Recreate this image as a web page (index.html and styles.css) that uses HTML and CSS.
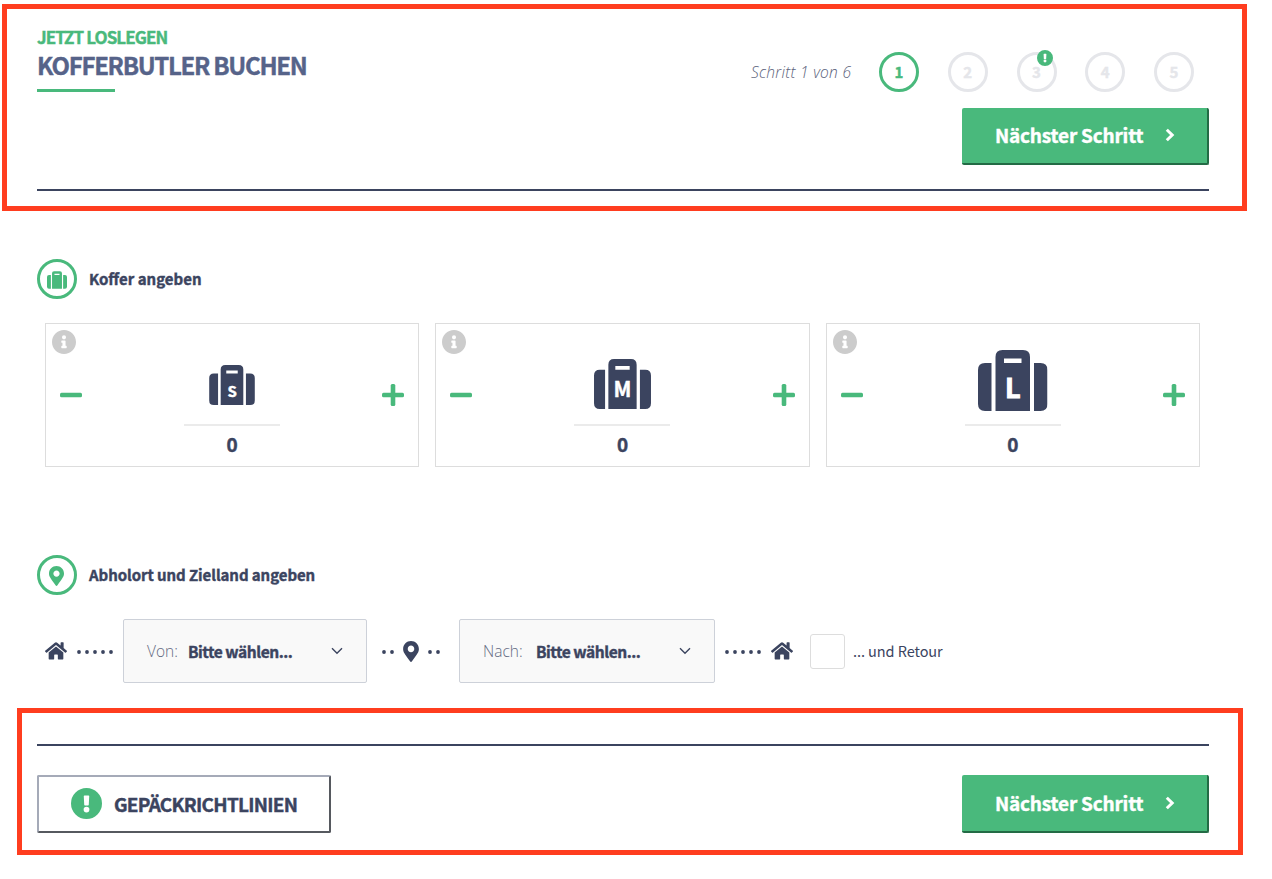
FILE: index.html
```html
<!DOCTYPE html>
<html lang="de">
<head>
<meta charset="utf-8">
<title>Kofferbutler buchen</title>
<link rel="stylesheet" href="styles.css">
</head>
<body>
<svg class="defs" width="0" height="0">
  <symbol id="suitcase" viewBox="0 0 69.5 61">
    <path d="M13.5 13H7Q0 13 0 20v34q0 7 7 7h6.5zM56 13h6.5q7 0 7 7v34q0 7-7 7H56z"/>
    <path fill-rule="evenodd" d="M17.5 61V7q0-7 7-7H45q7 0 7 7v54zM26 8.5V13h17.500V8.500z"/>
  </symbol>
  <symbol id="pin" viewBox="0 0 384 512"><path d="M172.300 501.700C27 291 0 269.400 0 192 0 86 86 0 192 0s192 86 192 192c0 77.400-27 99-172.300 309.700-9.500 13.800-29.900 13.800-39.400 0zM192 272c44.200 0 80-35.800 80-80s-35.800-80-80-80-80 35.800-80 80 35.800 80 80 80z"/></symbol>
  <symbol id="home" viewBox="0 0 576 450"><path d="M280.400 115.300 96 267.100V431a16 16 0 0 0 16 16l112-.3a16 16 0 0 0 16-16V335a16 16 0 0 1 16-16h64a16 16 0 0 1 16 16v95.600a16 16 0 0 0 16 16l112 .4a16 16 0 0 0 16-16V267L295.700 115.300a12 12 0 0 0-15.300 0zM571.600 218.500 488 149.600V11.100a12 12 0 0 0-12-12h-56a12 12 0 0 0-12 12v72.600L318.500 10a48 48 0 0 0-61 0L4.300 218.500a12 12 0 0 0-1.600 16.900l25.500 31a12 12 0 0 0 16.900 1.600L280.400 74.100a12 12 0 0 1 15.300 0L531 267.900a12 12 0 0 0 16.900-1.600l25.500-31a12 12 0 0 0-1.800-16.800z"/></symbol>
  <symbol id="info" viewBox="8 8 496 496"><path d="M256 8C119 8 8 119 8 256s111 248 248 248 248-111 248-248S393 8 256 8zm0 110a42 42 0 1 1 0 84 42 42 0 0 1 0-84zm56 254a12 12 0 0 1-12 12h-88a12 12 0 0 1-12-12v-24a12 12 0 0 1 12-12h12v-64h-12a12 12 0 0 1-12-12v-24a12 12 0 0 1 12-12h64a12 12 0 0 1 12 12v100h12a12 12 0 0 1 12 12z"/></symbol>
  <symbol id="alert" viewBox="8 8 496 496"><path d="M504 256a248 248 0 1 1-496 0 248 248 0 0 1 496 0zM256 306a46 46 0 1 0 0 92 46 46 0 0 0 0-92zm-43.700-165.300 7.400 136a12 12 0 0 0 12 11.300h48.600a12 12 0 0 0 12-11.300l7.400-136a12 12 0 0 0-12-12.700h-63.400a12 12 0 0 0-12 12.700z"/></symbol>
  <symbol id="dots5" viewBox="0 0 36 4"><circle cx="2" cy="2" r="1.900"/><circle cx="10" cy="2" r="1.900"/><circle cx="18" cy="2" r="1.900"/><circle cx="26" cy="2" r="1.900"/><circle cx="34" cy="2" r="1.900"/></symbol>
  <symbol id="dots2" viewBox="0 0 12 4"><circle cx="2" cy="2" r="1.900"/><circle cx="10" cy="2" r="1.900"/></symbol>
  <symbol id="minus" viewBox="0 0 22 22"><rect y="8.700" width="22" height="4.600" rx="1.500"/></symbol>
  <symbol id="plus" viewBox="0 0 22 22"><rect y="8.700" width="22" height="4.600" rx="1.500"/><rect x="8.700" width="4.600" height="22" rx="1.500"/></symbol>
  <symbol id="next" viewBox="0 0 10 14"><path d="M1.800 1.700L7.200 7l-5.400 5.300" fill="none" stroke="currentColor" stroke-width="3"/></symbol>
  <symbol id="down" viewBox="0 0 12 8"><path d="M1 1.200l5 5 5-5" fill="none" stroke="currentColor" stroke-width="1.400"/></symbol>
</svg>

<main class="page">
  <header class="header">
    <div class="heading">
      <p class="kicker"><span>JETZT LOSLEGEN</span></p>
      <h1 class="title"><span>KOFFERBUTLER BUCHEN</span></h1>
      <div class="underline"></div>
    </div>
    <div class="progress">
      <div class="steps">
        <span class="steps-label">Schritt 1 von 6</span>
        <span class="step step-active">1</span>
        <span class="step">2</span>
        <span class="step">3<svg class="step-badge"><use href="#alert"/></svg></span>
        <span class="step">4</span>
        <span class="step">5</span>
      </div>
      <button class="btn btn-next"><span>Nächster Schritt</span><svg class="icon-next"><use href="#next"/></svg></button>
    </div>
  </header>

  <section class="section">
    <h2 class="section-title"><span class="ring"><svg class="ring-case"><use href="#suitcase"/></svg></span><span>Koffer angeben</span></h2>
    <div class="cards">
      <article class="card">
        <svg class="info"><use href="#info"/></svg>
        <svg class="sign"><use href="#minus"/></svg>
        <div class="amount">
          <div class="case case-s"><svg><use href="#suitcase"/></svg><b class="size">S</b></div>
          <div class="count">0</div>
        </div>
        <svg class="sign"><use href="#plus"/></svg>
      </article>
      <article class="card">
        <svg class="info"><use href="#info"/></svg>
        <svg class="sign"><use href="#minus"/></svg>
        <div class="amount">
          <div class="case case-m"><svg><use href="#suitcase"/></svg><b class="size">M</b></div>
          <div class="count">0</div>
        </div>
        <svg class="sign"><use href="#plus"/></svg>
      </article>
      <article class="card">
        <svg class="info"><use href="#info"/></svg>
        <svg class="sign"><use href="#minus"/></svg>
        <div class="amount">
          <div class="case case-l"><svg><use href="#suitcase"/></svg><b class="size">L</b></div>
          <div class="count">0</div>
        </div>
        <svg class="sign"><use href="#plus"/></svg>
      </article>
    </div>
  </section>

  <section class="section section-route">
    <h2 class="section-title"><span class="ring"><svg class="ring-pin"><use href="#pin"/></svg></span><span class="route-title">Abholort und Zielland angeben</span></h2>
    <div class="route">
      <svg class="home"><use href="#home"/></svg>
      <svg class="dots5"><use href="#dots5"/></svg>
      <div class="select select-from"><span class="select-label">Von:</span><span class="select-value">Bitte wählen...</span><svg class="down"><use href="#down"/></svg></div>
      <svg class="dots2"><use href="#dots2"/></svg>
      <svg class="pin"><use href="#pin"/></svg>
      <svg class="dots2"><use href="#dots2"/></svg>
      <div class="select select-to"><span class="select-label">Nach:</span><span class="select-value">Bitte wählen...</span><svg class="down"><use href="#down"/></svg></div>
      <svg class="dots5"><use href="#dots5"/></svg>
      <svg class="home"><use href="#home"/></svg>
      <span class="checkbox"></span>
      <span class="return">... und Retour</span>
    </div>
  </section>

  <footer class="footer">
    <button class="btn btn-rules"><svg class="icon-alert"><use href="#alert"/></svg><span>GEPÄCKRICHTLINIEN</span></button>
    <button class="btn btn-next"><span>Nächster Schritt</span><svg class="icon-next"><use href="#next"/></svg></button>
  </footer>
  <div class="frame frame-top"></div>
  <div class="frame frame-bottom"></div>
</main>
</body>
</html>
```
FILE: styles.css
```css
* { box-sizing: border-box; }
body { margin: 0; background: #fff; color: #3b445f; font-family: "Noto Sans CJK SC", "Noto Sans", sans-serif; }
svg { display: block; flex: none; fill: currentColor; }
.defs { position: absolute; }
p, h1, h2 { margin: 0; }
span { white-space: nowrap; }
.page { position: relative; width: 1272px; height: 879px; padding: 0 63px 0 37px; overflow: hidden; }
.kicker, .title, .section-title, .select-value, .btn, .count, .step, .size { -webkit-text-stroke: 0.4px currentColor; }

.header { display: flex; justify-content: space-between; height: 191px; border-bottom: 2px solid #3b445f; }
.heading { padding-top: 25px; }
.kicker { height: 24px; color: #49b97c; font-size: 17px; font-weight: 700; line-height: 24px; letter-spacing: -0.92px; }
.title { height: 31px; color: #566389; font-size: 24px; font-weight: 700; line-height: 31px; letter-spacing: -1.3px; }
.underline { width: 78px; height: 3px; margin-top: 9px; background: #49b97c; }
.progress { display: flex; flex-direction: column; align-items: flex-end; gap: 16px; padding-top: 52px; }
.steps { display: flex; align-items: center; gap: 28.75px; height: 40px; padding-right: 15px; }
.steps-label { margin-right: -1px; color: #5a617a; font: italic 300 15.500px/20px "Open Sans", sans-serif; letter-spacing: 0.28px; }
.step { position: relative; display: flex; align-items: center; justify-content: center; width: 40px; height: 40px; border: 3px solid #e5e6ea; border-radius: 50%; color: #e5e6ea; font-size: 15px; font-weight: 700; line-height: 20px; }
.step-active { border-color: #49b97c; color: #49b97c; }
.step-badge { position: absolute; top: -5px; right: 0.5px; width: 16px; height: 16px; color: #49b97c; background: radial-gradient(circle, #fff 50%, transparent 55%); }

.btn { display: flex; align-items: center; margin: 0; font: inherit; font-size: 19px; font-weight: 700; line-height: 28px; border-radius: 2px; }
.btn-next { width: 247px; height: 57px; padding: 0 32px 1px 33px; justify-content: space-between; border: 0 solid #236b45; border-width: 0 2px 2px 0; background: #49b97c; color: #fff; letter-spacing: -0.2px; }
.icon-next { width: 10px; height: 14px; }

.section { padding-top: 68px; }
.section-title { display: flex; align-items: center; gap: 12px; height: 40px; font-size: 15px; line-height: 24px; font-weight: 700; }
.route-title { letter-spacing: -0.07px; }
.ring { display: flex; align-items: center; justify-content: center; width: 40px; height: 40px; border: 3px solid #49b97c; border-radius: 50%; color: #49b97c; }
.ring-case { width: 20px; height: 18px; margin-top: 1px; }
.ring-pin { width: 15px; height: 20px; margin: 2px 1px 0 0; }
.cards { display: grid; grid-template-columns: repeat(3, 1fr); gap: 16px; width: 1155px; margin: 24px 0 0 8px; }
.card { position: relative; display: flex; align-items: center; justify-content: space-between; height: 144px; padding: 0 14px; border: 1px solid #ddd; }
.info { position: absolute; top: 6px; left: 6px; width: 24px; height: 24px; color: #ccc; }
.sign { width: 22px; height: 22px; color: #49b97c; }
.amount { width: 96px; height: 142px; }
.case { position: relative; display: flex; align-items: flex-end; justify-content: center; height: 102px; border-bottom: 2px solid #ebebeb; }
.case-s { padding-bottom: 19px; }
.case-s svg { width: 46px; height: 40px; }
.case-m { padding-bottom: 15px; }
.case-m svg { width: 57px; height: 50px; }
.case-l { padding-bottom: 13px; }
.case-l svg { width: 69.5px; height: 61px; }
.size { position: absolute; left: 0; right: 0; text-align: center; color: #fff; line-height: 24px; }
.case-s .size { bottom: 21px; font-size: 15px; }
.case-m .size { bottom: 24px; font-size: 21px; }
.case-l .size { bottom: 25px; font-size: 27px; -webkit-text-stroke-width: 1px; }
.count { margin-top: 5px; text-align: center; font-size: 19px; font-weight: 700; line-height: 26px; }

.section-route { padding-top: 88px; }
.route { display: flex; align-items: center; height: 64px; margin: 24px 0 0 8px; }
.home { width: 22px; height: 18px; }
.dots5 { width: 36px; height: 4px; margin: 1px 10px 0; }
.dots2 { width: 12px; height: 4px; margin-top: 1px; }
.select { display: flex; align-items: center; height: 64px; padding: 0 23px; border: 1px solid #cdd1d9; border-radius: 2px; background: #f9f9f9; }
.select-from { width: 244px; margin-right: 15px; }
.select-to { width: 256px; margin-left: 19px; }
.select-label { width: 41px; color: #636a82; font: 300 15.500px/24px "Open Sans", sans-serif; }
.select-to .select-label { width: 53px; }
.select-value { font-size: 15.500px; font-weight: 700; line-height: 24px; letter-spacing: -0.47px; }
.down { width: 12px; height: 8px; margin-left: auto; }
.pin { width: 16px; height: 21px; margin: 0 9px; }
.checkbox { width: 35px; height: 35px; margin: 0 8px 0 17px; border: 1px solid #ddd; border-radius: 3px; }
.return { font-size: 14.500px; line-height: 24px; letter-spacing: -0.07px; }

.footer { display: flex; justify-content: space-between; margin-top: 61px; padding-top: 29px; border-top: 2px solid #3b445f; }
.footer .btn { height: 58px; }
.btn-rules { width: 294px; padding: 0 32px 1px; gap: 12px; border: 2px solid; border-color: #a5aab8 #56595f #56595f #a5aab8; background: #fff; color: #3b445f; letter-spacing: -0.75px; }
.icon-alert { width: 31px; height: 31px; color: #49b97c; }

/* highlight frames drawn over the page */
.frame { position: absolute; border: 5px solid #ff3d1f; pointer-events: none; }
.frame-top { left: 2px; top: 4px; width: 1245px; height: 207px; }
.frame-bottom { left: 17px; top: 708px; width: 1226px; height: 147px; }
```
